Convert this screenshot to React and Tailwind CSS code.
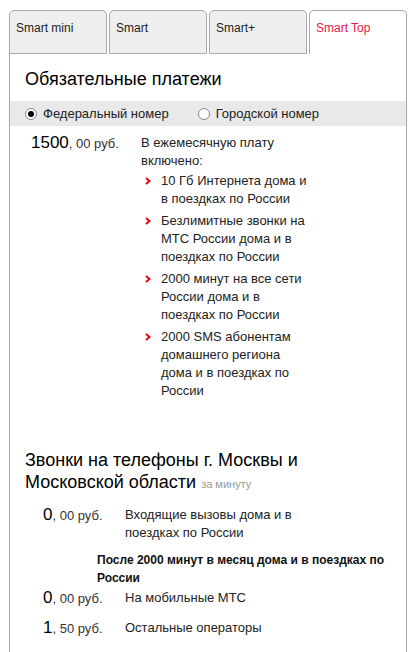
import React from "react";

const font = { fontFamily: '"Liberation Sans", Arial, sans-serif' };

function Chevron() {
  return (
    <svg width="6" height="8" viewBox="0 0 6 8" className="shrink-0 mt-[5px]">
      <path d="M1 1 L4.5 4 L1 7" fill="none" stroke="#e30611" strokeWidth="2" />
    </svg>
  );
}

function Radio({ checked }) {
  return (
    <span className="w-[12px] h-[12px] rounded-full border border-[#8a8a8a] bg-white flex items-center justify-center shrink-0">
      {checked && <span className="w-[6px] h-[6px] rounded-full bg-black" />}
    </span>
  );
}

const bullets = [
  "10 Гб Интернета дома и в поездках по России",
  "Безлимитные звонки на МТС России дома и в поездках по России",
  "2000 минут на все сети России дома и в поездках по России",
  "2000 SMS абонентам домашнего региона дома и в поездках по России",
];

export default function App() {
  const tabs = ["Smart mini", "Smart", "Smart+", "Smart Top"];
  return (
    <div className="w-[416px] h-[652px] overflow-hidden bg-white text-[#1a1a1a] flex flex-col pt-[10px] px-[9px]" style={font}>
      <div className="flex gap-[2px] h-[44px] shrink-0">
        {tabs.map((t, i) => {
          const active = i === 3;
          return (
            <div
              key={t}
              className={
                "flex-1 rounded-t-[5px] border-t border-l border-r border-[#a8a8a8] px-[6px] pt-[8px] text-[12px] " +
                (active ? "bg-white text-[#e4184d]" : "bg-[#efefef] border-b text-[#222]")
              }
            >
              {t}
            </div>
          );
        })}
      </div>
      <div className="flex-1 border-l border-r border-[#a8a8a8] bg-white flex flex-col">
        <h1 className="text-[18px] leading-[22px] text-black pl-[15px] pt-[14px] pb-[11px]">Обязательные платежи</h1>
        <div className="bg-[#e9e9e9] h-[25px] flex items-center text-[13px] text-[#222] pl-[15px]">
          <Radio checked />
          <span className="ml-[6px]">Федеральный номер</span>
          <span className="ml-[29px]"><Radio /></span>
          <span className="ml-[6px]">Городской номер</span>
        </div>
        <div className="flex pt-[7px] pl-[21px]">
          <div className="w-[110px] shrink-0 whitespace-nowrap leading-[20px]">
            <span className="text-[17px] text-black">1500</span>
            <span className="text-[13px] text-[#333]">, 00 руб.</span>
          </div>
          <div className="w-[170px] text-[13px] leading-[18px] text-[#222] pt-[1px]">
            <div>В ежемесячную плату включено:</div>
            <div className="flex flex-col gap-[4px] mt-[2px] pl-[4px]">
              {bullets.map((b) => (
                <div key={b} className="flex gap-[10px]">
                  <Chevron />
                  <div className="w-[150px]">{b}</div>
                </div>
              ))}
            </div>
          </div>
        </div>
        <div className="pl-[15px] pt-[49px] text-[18px] leading-[22px] text-black w-[320px]">
          Звонки на телефоны г. Москвы и Московской области{" "}
          <span className="text-[11px] leading-[14px] text-[#999]">за минуту</span>
        </div>
        <div className="flex pt-[12px] pl-[33px]">
          <div className="w-[82px] shrink-0 whitespace-nowrap leading-[20px]">
            <span className="text-[17px] text-black">0</span>
            <span className="text-[13px] text-[#333]">, 00 руб.</span>
          </div>
          <div className="w-[180px] text-[13px] leading-[18px] text-[#222] pt-[1px]">
            Входящие вызовы дома и в поездках по России
          </div>
        </div>
        <div className="pl-[87px] pt-[9px] text-[12px] leading-[18px] font-bold text-[#111] w-[390px]">
          После 2000 минут в месяц дома и в поездках по России
        </div>
        <div className="flex pt-[1px] pl-[33px]">
          <div className="w-[82px] shrink-0 whitespace-nowrap leading-[20px]">
            <span className="text-[17px] text-black">0</span>
            <span className="text-[13px] text-[#333]">, 00 руб.</span>
          </div>
          <div className="text-[13px] leading-[18px] text-[#222] pt-[1px]">На мобильные МТС</div>
        </div>
        <div className="flex pt-[9px] pl-[33px]">
          <div className="w-[82px] shrink-0 whitespace-nowrap leading-[20px]">
            <span className="text-[17px] text-black">1</span>
            <span className="text-[13px] text-[#333]">, 50 руб.</span>
          </div>
          <div className="text-[13px] leading-[18px] text-[#222] pt-[1px]">Остальные операторы</div>
        </div>
      </div>
    </div>
  );
}
